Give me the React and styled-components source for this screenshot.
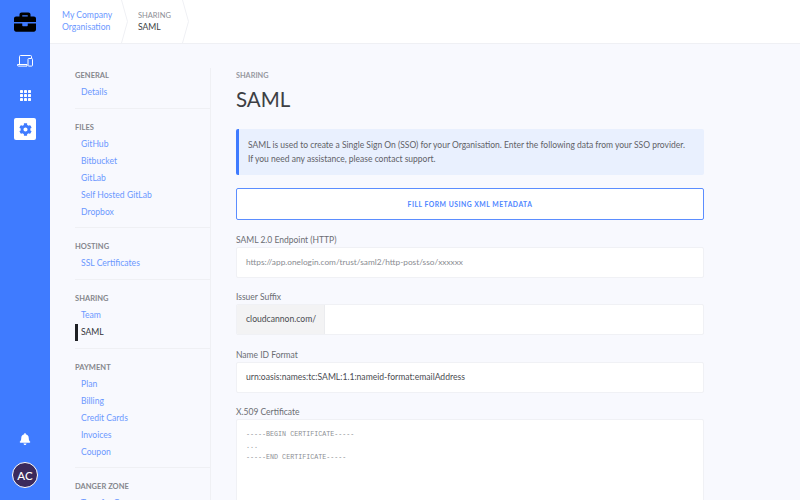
import React from "react";
import styled, { createGlobalStyle } from "styled-components";
import { FaBell, FaBriefcase, FaCog } from "react-icons/fa";

const GlobalStyle = createGlobalStyle`
  html, body {
    margin: 0;
    height: 100%;
    overflow: hidden;
    background: #f8f9fe;
    font-family: "Lato", "Liberation Sans", sans-serif;
  }
  * { box-sizing: border-box; }
`;

const Page = styled.div`
  display: flex;
  width: 800px;
  height: 500px;
  overflow: hidden;
`;

const Sidebar = styled.aside`
  width: 50px;
  flex: none;
  background: #3f7bff;
  display: flex;
  flex-direction: column;
  align-items: center;
  padding: 11px 0 12px;
`;

const Logo = styled.div`
  height: 22px;
  color: #000;
  font-size: 22px;
  display: flex;
  align-items: center;
  margin-bottom: 17px;
`;

const SideIcon = styled.div`
  width: 22px;
  height: 22px;
  margin-bottom: 12px;
  border-radius: 2px;
  display: flex;
  align-items: center;
  justify-content: center;
  color: ${(props) => (props.active ? "#3f7bff" : "#fff")};
  background: ${(props) => (props.active ? "#fff" : "transparent")};
`;

const Spacer = styled.div`
  flex: 1;
`;

const Avatar = styled.div`
  width: 26px;
  height: 26px;
  border-radius: 50%;
  border: 1px solid #fff;
  background: #3b2a5c;
  color: #fff;
  font-size: 11.5px;
  font-weight: 500;
  display: flex;
  align-items: center;
  justify-content: center;
`;

const Content = styled.div`
  flex: 1;
  min-width: 0;
  display: flex;
  flex-direction: column;
`;

const TopBar = styled.header`
  height: 44px;
  flex: none;
  background: #fff;
  border-bottom: 1px solid #eff0f4;
  display: flex;
  padding-left: 12px;
`;

const Crumb = styled.div`
  width: ${(props) => props.width}px;
  display: flex;
  flex-direction: column;
  justify-content: center;
  gap: 1px;
  font-size: 8.6px;
  line-height: 11.5px;
  color: ${(props) => (props.link ? "#6b98ff" : "#3d3f44")};
`;

const CrumbSmall = styled.span`
  font-size: 7.5px;
  color: #8c8e94;
`;

const Chevron = styled.svg`
  width: 7px;
  height: 43px;
  flex: none;
  margin-right: ${(props) => props.gap}px;
`;

const Body = styled.div`
  flex: 1;
  min-height: 0;
  display: flex;
`;

const Nav = styled.nav`
  width: 136px;
  flex: none;
  margin: 24px 0 0 25px;
  border-right: 1px solid #eff0f4;
`;

const NavSection = styled.section`
  padding-bottom: 6.7px;
  margin-bottom: 11px;
  border-bottom: 1px solid #eff0f4;
`;

const NavHeading = styled.h4`
  margin: 0 0 1px;
  height: 15px;
  line-height: 15px;
  font-size: 7.5px;
  font-weight: 700;
  letter-spacing: 0.03px;
  color: #85878d;
`;

const NavItem = styled.a`
  display: block;
  height: 17px;
  line-height: 17px;
  padding-left: 3px;
  font-size: 8.6px;
  color: ${(props) => (props.active ? "#33353a" : "#6b98ff")};
  border-left: 3px solid ${(props) => (props.active ? "#1e2024" : "transparent")};
`;

const Main = styled.main`
  width: 468px;
  flex: none;
  margin-left: 25px;
  padding-top: 24px;
`;

const Eyebrow = styled.div`
  height: 15px;
  line-height: 15px;
  font-size: 7.3px;
  font-weight: 700;
  color: #96989e;
`;

const Title = styled.h1`
  margin: 1px 0 0;
  height: 30px;
  line-height: 30px;
  font-size: 20.5px;
  font-weight: 400;
  color: #3d3f44;
`;

const Alert = styled.div`
  margin-top: 15px;
  height: 46px;
  padding: 9px 9px;
  background: #e9f0fe;
  border-left: 3px solid #3f7bff;
  border-radius: 2px;
  font-size: 8.5px;
  line-height: 14px;
  color: #5f6167;
`;

const OutlineButton = styled.button`
  display: block;
  width: 100%;
  height: 32px;
  margin: 13px 0 0;
  background: #fff;
  border: 1px solid #5b8dff;
  border-radius: 2px;
  font: 700 6.8px "Lato", sans-serif;
  letter-spacing: 0.5px;
  color: #4f86ff;
`;

const Label = styled.div`
  margin-top: ${(props) => props.top}px;
  height: 14px;
  line-height: 14px;
  font-size: 8.5px;
  color: #6b6d73;
`;

const Field = styled.div`
  display: flex;
  height: 31px;
  background: #fff;
  border: 1px solid #f0f1f5;
  border-radius: 2px;
  overflow: hidden;
`;

const FieldText = styled.span`
  padding-left: 9px;
  line-height: 29px;
  font-size: ${(props) => (props.muted ? 8.3 : 8.6)}px;
  color: ${(props) => (props.muted ? "#8a8c92" : "#4a4c52")};
`;

const Addon = styled.span`
  width: 88px;
  flex: none;
  padding-left: 9px;
  line-height: 29px;
  font-size: 8.6px;
  color: #4a4c52;
  background: #f3f3f4;
  border-right: 1px solid #ebecef;
`;

const CertBox = styled.div`
  height: 120px;
  padding: 9px 9px;
  background: #fff;
  border: 1px solid #f0f1f5;
  border-radius: 2px;
  font-family: "Liberation Mono", monospace;
  font-size: 6.7px;
  line-height: 11.5px;
  color: #8d8f95;
  white-space: pre;
`;

const navGroups = [
  { title: "GENERAL", items: ["Details"] },
  { title: "FILES", items: ["GitHub", "Bitbucket", "GitLab", "Self Hosted GitLab", "Dropbox"] },
  { title: "HOSTING", items: ["SSL Certificates"] },
  { title: "SHARING", items: ["Team", "SAML"] },
  { title: "PAYMENT", items: ["Plan", "Billing", "Credit Cards", "Invoices", "Coupon"] },
  { title: "DANGER ZONE", items: ["Transfer Owner"] },
];

const DevicesIcon = () => (
  <svg width="16" height="12" viewBox="0 0 16 12" fill="none" stroke="currentColor" strokeWidth="1">
    <path d="M2.5 9V1.5q0-1 1-1h10q1 0 1 1V3" />
    <path d="M0.5 9.5h9.5v1.6H1.5q-1 0-1-1z" />
    <rect x="11" y="3.5" width="4.5" height="7.6" rx="0.8" />
  </svg>
);

const GridIcon = () => (
  <svg width="11" height="11" viewBox="0 0 11 11" fill="currentColor">
    {[0, 4, 8].map((y) =>
      [0, 4, 8].map((x) => <rect key={`${x}-${y}`} x={x} y={y} width="3" height="3" rx="0.4" />)
    )}
  </svg>
);

const CrumbEdge = ({ gap }) => (
  <Chevron gap={gap} viewBox="0 0 7 43" fill="none" stroke="#eff0f4">
    <path d="M0.5 0L6.5 21.5L0.5 43" />
  </Chevron>
);

export default function App() {
  return (
    <Page>
      <GlobalStyle />
      <Sidebar>
        <Logo>
          <FaBriefcase />
        </Logo>
        <SideIcon>
          <DevicesIcon />
        </SideIcon>
        <SideIcon>
          <GridIcon />
        </SideIcon>
        <SideIcon active>
          <FaCog size={13} />
        </SideIcon>
        <Spacer />
        <SideIcon>
          <FaBell size={12} />
        </SideIcon>
        <Avatar>AC</Avatar>
      </Sidebar>
      <Content>
        <TopBar>
          <Crumb link width={59}>
            <span>My Company</span>
            <span>Organisation</span>
          </Crumb>
          <CrumbEdge gap={10} />
          <Crumb width={44}>
            <CrumbSmall>SHARING</CrumbSmall>
            <span>SAML</span>
          </Crumb>
          <CrumbEdge gap={0} />
        </TopBar>
        <Body>
          <Nav>
            {navGroups.map((group) => (
              <NavSection key={group.title}>
                <NavHeading>{group.title}</NavHeading>
                {group.items.map((item) => (
                  <NavItem key={item} active={item === "SAML"}>
                    {item}
                  </NavItem>
                ))}
              </NavSection>
            ))}
          </Nav>
          <Main>
            <Eyebrow>SHARING</Eyebrow>
            <Title>SAML</Title>
            <Alert>
              SAML is used to create a Single Sign On (SSO) for your Organisation. Enter the following data from your SSO provider.
              <br />
              If you need any assistance, please contact support.
            </Alert>
            <OutlineButton>FILL FORM USING XML METADATA</OutlineButton>
            <Label top={13}>SAML 2.0 Endpoint (HTTP)</Label>
            <Field>
              <FieldText muted>https://app.onelogin.com/trust/saml2/http-post/sso/xxxxxx</FieldText>
            </Field>
            <Label top={12.4}>Issuer Suffix</Label>
            <Field>
              <Addon>cloudcannon.com/</Addon>
            </Field>
            <Label top={12.4}>Name ID Format</Label>
            <Field>
              <FieldText>urn:oasis:names:tc:SAML:1.1:nameid-format:emailAddress</FieldText>
            </Field>
            <Label top={12.4}>X.509 Certificate</Label>
            <CertBox>{"-----BEGIN CERTIFICATE-----\n...\n-----END CERTIFICATE-----"}</CertBox>
          </Main>
        </Body>
      </Content>
    </Page>
  );
}
